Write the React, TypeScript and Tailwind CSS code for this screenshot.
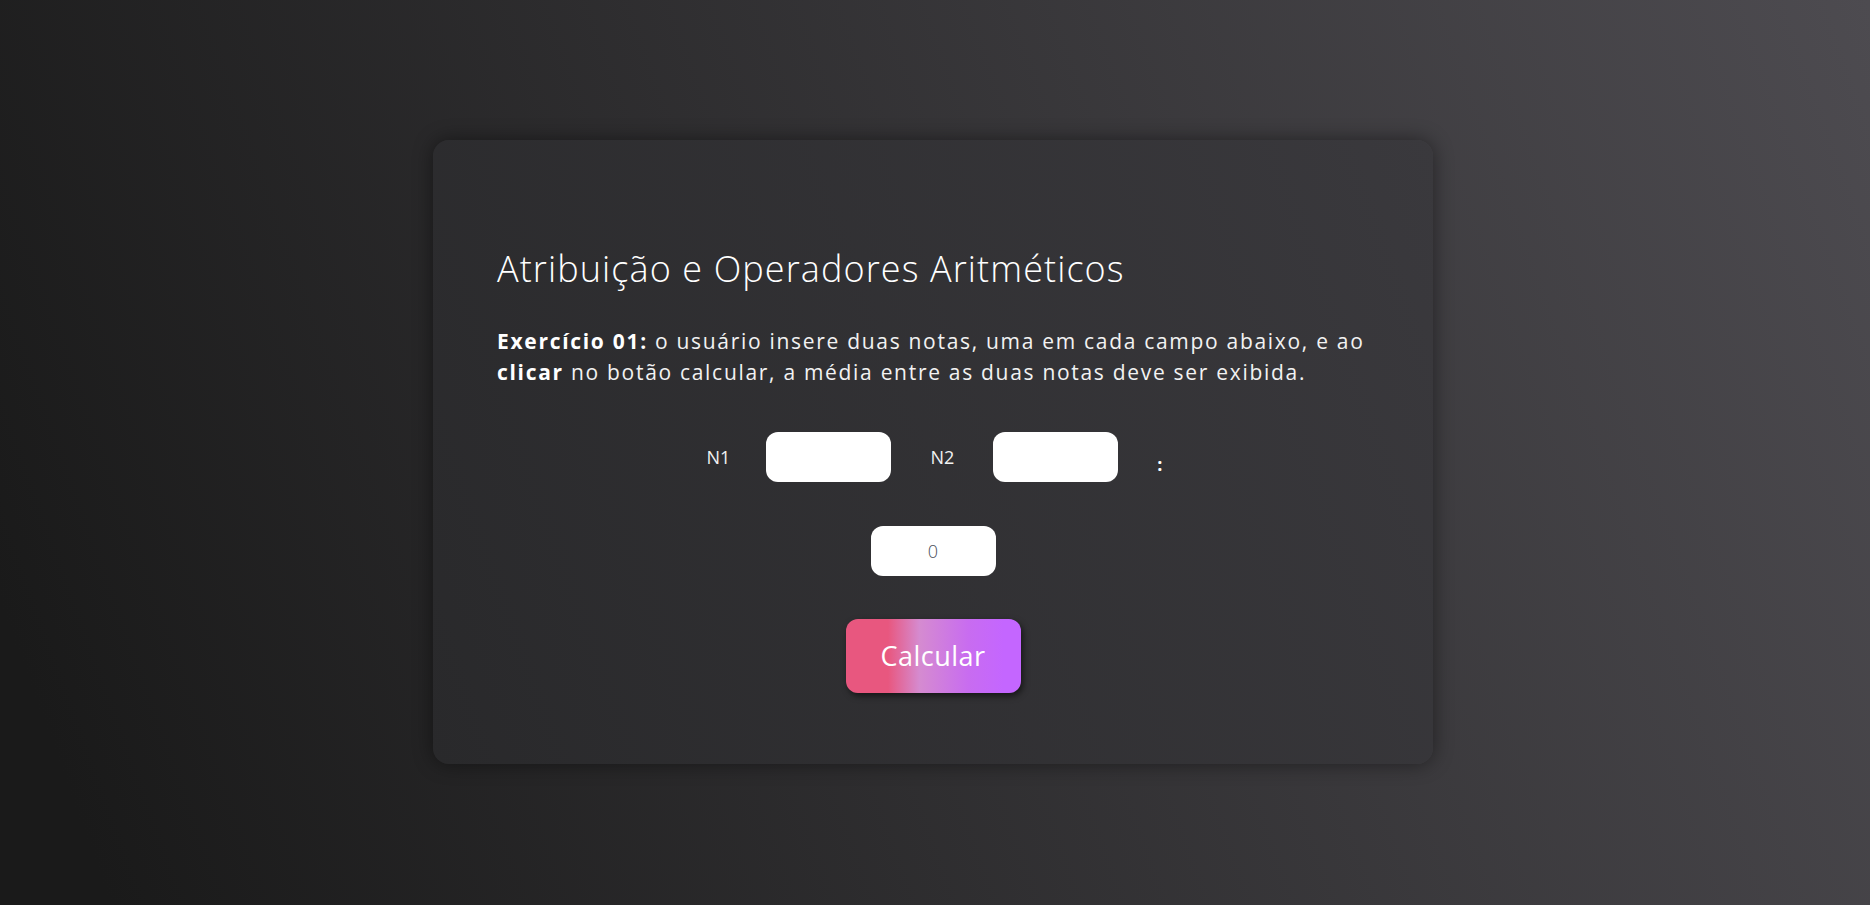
import { useState } from "react";

const App = () => {
  const [n1, setN1] = useState("");
  const [n2, setN2] = useState("");
  const [media, setMedia] = useState(0);

  const calcular = () => {
    const a = parseFloat(n1) || 0;
    const b = parseFloat(n2) || 0;
    setMedia((a + b) / 2);
  };

  return (
    <div className="min-h-screen w-full flex justify-center bg-[linear-gradient(70deg,#1a1a1a_5%,#4d4b50_100%)] font-['Open_Sans',sans-serif] text-white">
      {/* Card */}
      <main className="mt-[140px] mb-[141px] mr-[4px] w-[1000px] h-[624px] rounded-2xl bg-[linear-gradient(70deg,#29292b,#3a393d)] shadow-[0_0_20px_rgba(0,0,0,0.45)] px-16 pt-[107px]">
        <h1 className="text-[36px] font-light leading-[44px] tracking-[1.1px] text-white">
          Atribuição e Operadores Aritméticos
        </h1>

        <p className="mt-[35px] text-[21px] leading-[31px] tracking-[1.7px] text-[#f2f2f2]">
          <strong className="font-bold text-white">Exercício 01:</strong> o usuário insere duas notas, uma em cada campo abaixo, e ao{" "}
          <strong className="font-bold text-white">clicar</strong> no botão calcular, a média entre as duas notas deve ser exibida.
        </p>

        {/* Inputs */}
        <div className="mt-[44px] flex items-center justify-center gap-[39px]">
          <label htmlFor="n1" className="ml-[3px] -mr-[3px] text-[18px] text-[#f2f2f2]">
            N1
          </label>
          <input
            id="n1"
            type="number"
            value={n1}
            onChange={(e) => setN1(e.target.value)}
            className="w-[125px] h-[50px] rounded-xl bg-white text-[18px] text-[#555] text-center outline-none"
          />
          <label htmlFor="n2" className="text-[18px] text-[#f2f2f2]">
            N2
          </label>
          <input
            id="n2"
            type="number"
            value={n2}
            onChange={(e) => setN2(e.target.value)}
            className="w-[125px] h-[50px] rounded-xl bg-white text-[18px] text-[#555] text-center outline-none"
          />
          <span className="mt-[14px] text-[18px] font-bold leading-none">:</span>
        </div>

        {/* Resultado */}
        <div className="mt-[44px] flex justify-center">
          <output className="w-[125px] h-[50px] rounded-xl bg-white flex items-center justify-center text-[18px] font-light text-[#4a4f5a]">
            {media}
          </output>
        </div>

        {/* Botão */}
        <div className="mt-[43px] flex justify-center">
          <button
            type="button"
            onClick={calcular}
            className="w-[175px] h-[74px] rounded-xl bg-[linear-gradient(90deg,#e8577f_24%,#d58bd0_42%,#c86cf0_70%,#c466ff_90%)] shadow-[2px_3px_6px_rgba(0,0,0,0.55)] text-[27px] tracking-[0.5px] text-white"
          >
            Calcular
          </button>
        </div>
      </main>
    </div>
  );
};

export default App;
